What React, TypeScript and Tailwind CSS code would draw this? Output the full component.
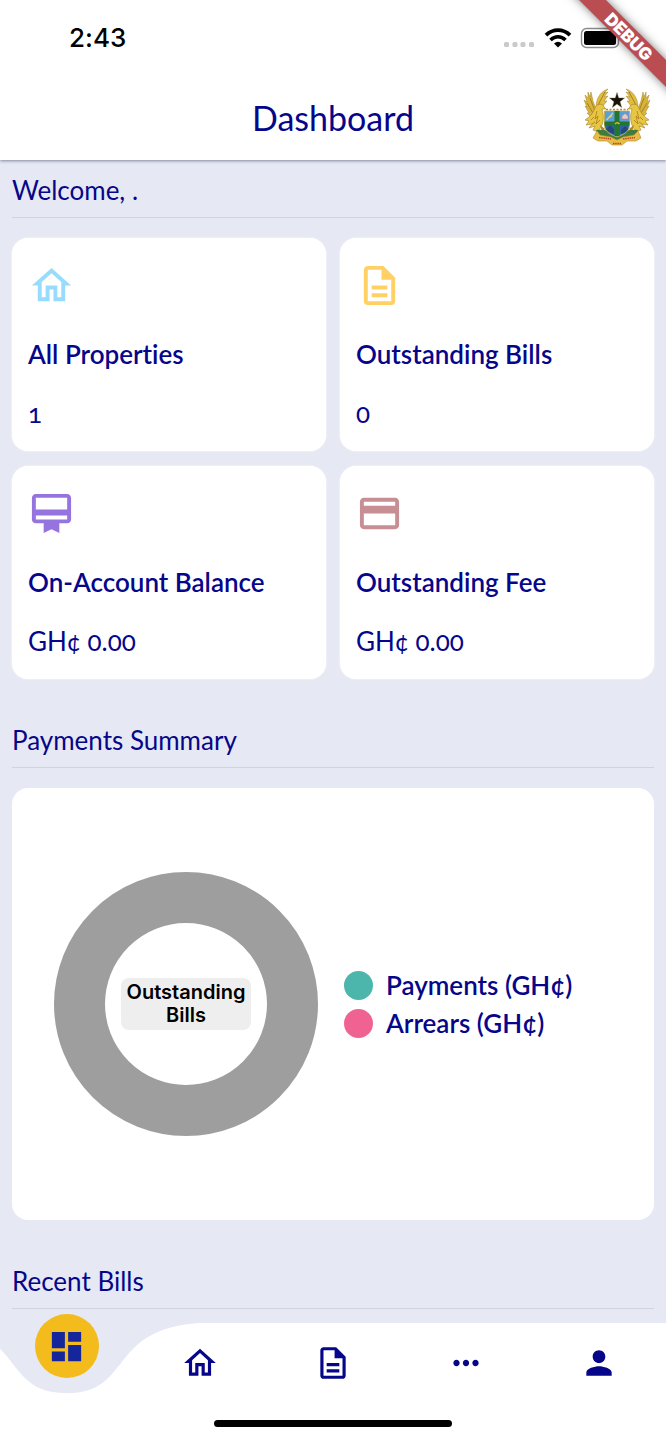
import type { ReactNode } from "react";

const HOME = "M12 5.69l5 4.5V18h-2v-6H9v6H7v-7.81l5-4.5M12 3L2 12h3v8h6v-6h2v6h6v-8h3L12 3z";
const DOC =
  "M8 16h8v2H8zm0-4h8v2H8zm6-10H6c-1.1 0-2 .9-2 2v16c0 1.1.89 2 1.99 2H18c1.1 0 2-.9 2-2V8l-6-6zm4 18H6V4h7v5h5v11z";
const MEMBERSHIP =
  "M20 2H4c-1.11 0-2 .89-2 2v11c0 1.11.89 2 2 2h4v5l4-2 4 2v-5h4c1.11 0 2-.89 2-2V4c0-1.11-.89-2-2-2zm0 13H4v-2h16v2zm0-5H4V4h16v6z";
const CARD =
  "M20 4H4c-1.11 0-1.99.89-1.99 2L2 18c0 1.11.89 2 2 2h16c1.11 0 2-.89 2-2V6c0-1.11-.89-2-2-2zm0 14H4v-6h16v6zm0-10H4V6h16v2z";
const DASHBOARD = "M3 13h8V3H3v10zm0 8h8v-6H3v6zm10 0h8V11h-8v10zm0-18v6h8V3h-8z";
const MORE =
  "M6 10c-1.1 0-2 .9-2 2s.9 2 2 2 2-.9 2-2-.9-2-2-2zm12 0c-1.1 0-2 .9-2 2s.9 2 2 2 2-.9 2-2-.9-2-2-2zm-6 0c-1.1 0-2 .9-2 2s.9 2 2 2 2-.9 2-2-.9-2-2-2z";
const PERSON =
  "M12 12c2.21 0 4-1.79 4-4s-1.79-4-4-4-4 1.79-4 4 1.79 4 4 4zm0 2c-2.67 0-8 1.34-8 4v2h16v-2c0-2.66-5.33-4-8-4z";

function Icon({ path, className }: { path: string; className: string }) {
  return (
    <svg viewBox="0 0 24 24" fill="currentColor" aria-hidden="true" className={className}>
      <path d={path} />
    </svg>
  );
}

function Eagle() {
  return (
    <g>
      <path d="M16 23 L13 15 L11 6 L10 11 L8 6 L8 12 L5 9 L7 16 L4 14 L7 21 L5 20 L9 27 L7 27 L12 32 Z" fill="#d8b43a" stroke="#a5822a" strokeWidth="0.5" />
      <path d="M16 22 C16 14 19 6 28 3 L24 7 L28 6 L24 11 L28 10 L24 15 L27 15 L22 21 Z" fill="#dfbd3f" stroke="#a5822a" strokeWidth="0.5" />
      <path d="M10 12 L15 25 M7 17 L13 27 M25 6 L18 19" fill="none" stroke="#8c6a1c" strokeWidth="0.7" />
      <path d="M16 20 C19 17 24 18 24 21 L26 23 L22 23 C24 29 24 36 21 41 C19 45 16 46 13 44 L15 40 L9 42 L12 38 L6 39 L9 35 L5 34 L9 31 C12 29 14 24 16 20 Z" fill="#e6c643" stroke="#a5822a" strokeWidth="0.6" />
      <path d="M17 25 L15 33 L18 30 L16 38 L20 34 M11 34 L14 31 M12 38 L15 36" fill="none" stroke="#ad7c1f" strokeWidth="0.8" />
      <path d="M20 39 L25 43 L22 46 Z" fill="#b9851f" />
    </g>
  );
}

function CoatOfArms() {
  return (
    <svg viewBox="0 0 74 64" role="img" aria-label="Ghana coat of arms" className="h-16 w-[74px]">
      <Eagle />
      <g transform="translate(74 0) scale(-1 1)">
        <Eagle />
      </g>
      <path d="M16 44 Q27 43 37 48 Q47 43 58 44 L54 53 Q45 50 37 55 Q29 50 20 53 Z" fill="#3f7d3d" />
      <path d="M24.500 25 H49.500 V39 C49.500 46 43 49 37 51 C31 49 24.500 46 24.500 39 Z" fill="#5a9fd8" stroke="#c8a838" strokeWidth="0.8" />
      <path d="M25 39 H49 C49 45 43 48 37 50 C31 48 25 45 25 39 Z" fill="#2b62a0" />
      <path d="M26 43 L30 39 L34 43 V48 Q28 46 26 43 Z M41 44 L45 40 L48 43 Q46 47 41 48 Z" fill="#27467a" />
      <path d="M34.500 25 H39.500 V50 H34.500 Z M24.500 35.500 H49.500 V39.500 H24.500 Z" fill="#24762f" />
      <path d="M26.500 34 L33 27 M28 32 L32 30" stroke="#e5cf78" strokeWidth="1.300" />
      <path d="M42 33 V30 L45 27.500 L48 30 V33 Z" fill="#edc9cb" stroke="#b87571" strokeWidth="0.500" />
      <path d="M35 38 Q37 35.500 39.500 38" fill="none" stroke="#d4b435" strokeWidth="1.500" />
      <path d="M26 23.500 H48" stroke="#b48a55" strokeWidth="1.400" strokeDasharray="2 1.500" />
      <path d="M37 6.500 L38.700 12 L44.500 12 L40 15.700 L41.700 21.500 L37 18 L32.300 21.500 L34 15.700 L29.500 12 L35.300 12 Z" fill="#16130c" stroke="#8b6a28" strokeWidth="0.400" />
      <path d="M17 45 L20 49 L31 51 L37 54 L43 51 L54 49 L58 45 L61 52 L56 55 L47 55 L42 59 H32 L27 55 L18 55 L13 52 Z" fill="#e6bd45" stroke="#b78625" strokeWidth="0.600" />
      <path d="M19 51.500 L31 53 M43 53 L55 51.500 M33 57.500 H41" stroke="#b5472c" strokeWidth="1.500" strokeDasharray="1.500 0.700" />
    </svg>
  );
}

function StatusBar() {
  return (
    <div className="flex h-[76px] items-center justify-between pr-11 pl-[69px]">
      <time className="font-['Inter',sans-serif] text-[26px] leading-8 font-medium text-black">2:43</time>
      <div className="flex items-center gap-2">
        <svg viewBox="0 0 34 26" aria-hidden="true" className="h-[26px] w-[34px]" fill="#cacaca">
          <rect x="2" y="17" width="5" height="5" rx="1.500" />
          <rect x="10.500" y="17" width="5" height="5" rx="1.500" />
          <rect x="18.500" y="17" width="5" height="5" rx="1.500" />
          <rect x="27" y="17" width="5" height="5" rx="1.500" />
        </svg>
        <svg viewBox="0 0 28 20" aria-hidden="true" className="h-5 w-7">
          <path d="M2 7.200 C9 .5 19 .5 26 7.200" fill="none" stroke="#000" strokeWidth="3.800" />
          <path d="M6.500 12 C11 7.700 17 7.700 21.500 12" fill="none" stroke="#000" strokeWidth="3.600" />
          <path d="M10 15.500 Q14 12 18 15.500 L14 19.500 Z" />
        </svg>
        <svg viewBox="0 0 42 22" aria-hidden="true" className="h-[22px] w-[42px]">
          <rect x="1.500" y="1.500" width="37" height="19" rx="5" fill="#fff" stroke="#8b8b8b" strokeWidth="1.400" />
          <rect x="4" y="4" width="32" height="14" rx="2.500" />
        </svg>
      </div>
    </div>
  );
}

function SectionTitle({ children }: { children: ReactNode }) {
  return (
    <h2 className="border-b border-[#d0d3dd] pb-[11px] text-[26px] leading-8 font-normal">{children}</h2>
  );
}

const stats = [
  { label: "All Properties", value: "1", icon: HOME, tint: "text-[#97dcfd]" },
  { label: "Outstanding Bills", value: "0", icon: DOC, tint: "text-[#ffd164]" },
  { label: "On-Account Balance", value: "GH¢ 0.00", icon: MEMBERSHIP, tint: "text-[#9674df]" },
  { label: "Outstanding Fee", value: "GH¢ 0.00", icon: CARD, tint: "text-[#c78e94]" },
];

const legend = [
  { label: "Payments (GH¢)", color: "bg-[#4db6ac]" },
  { label: "Arrears (GH¢)", color: "bg-[#f06292]" },
];

const tabs = [
  { label: "Properties", icon: HOME },
  { label: "Bills", icon: DOC },
  { label: "More", icon: MORE },
  { label: "Profile", icon: PERSON },
];

export default function App() {
  return (
    <div className="relative flex min-h-screen flex-col overflow-hidden bg-[#e6e9f3] font-['Lato',sans-serif] text-[#06068a] [font-variant-ligatures:none]">
      <header className="relative z-10 bg-white shadow-[0_1px_3px_rgba(60,70,100,0.6)]">
        <StatusBar />
        <div className="grid h-[84px] grid-cols-[1fr_auto_1fr] items-center">
          <h1 className="col-start-2 text-[34px] leading-10 font-normal">Dashboard</h1>
          <div className="justify-self-end pr-3">
            <CoatOfArms />
          </div>
        </div>
      </header>
      <div className="absolute top-[27px] -right-[63px] z-20 flex h-[19px] w-[200px] rotate-45 items-center justify-center bg-[#b94d52] font-['Inter',sans-serif] text-[17px] leading-5 font-black text-white shadow-[0_0_10px_rgba(0,0,0,0.5)]">
        DEBUG
      </div>

      <main className="flex-1 px-3 pt-[14px]">
        <SectionTitle>Welcome, .</SectionTitle>
        <div className="mt-5 grid grid-cols-2 gap-x-[14px] gap-y-[15px]">
          {stats.map((s) => (
            <section key={s.label} className="rounded-2xl bg-white px-4 pt-6 pb-[22px] shadow-[0_0_2px_#ffffff]">
              <Icon path={s.icon} className={`size-[47px] ${s.tint}`} />
              <h3 className="mt-[29px] text-[26px] leading-8 font-semibold">{s.label}</h3>
              <p className="mt-[27px] text-[26px] leading-8 oldstyle-nums">{s.value}</p>
            </section>
          ))}
        </div>

        <div className="mt-[45px]">
          <SectionTitle>Payments Summary</SectionTitle>
        </div>
        <section className="mt-5 flex h-[432px] items-center gap-[26px] rounded-2xl bg-white pl-[42px]">
          <div className="flex size-[264px] shrink-0 items-center justify-center rounded-full border-[51px] border-[#9e9e9e]">
            <p className="w-[130px] shrink-0 rounded-lg bg-[#eeeeee] py-[3px] text-center font-['Inter',sans-serif] text-[20px] leading-[23px] font-semibold text-black">
              Outstanding Bills
            </p>
          </div>
          <ul className="flex flex-col gap-[6px]">
            {legend.map((l) => (
              <li key={l.label} className="flex items-center gap-[13px] text-[26px] leading-8 font-semibold">
                <span className={`size-[29px] rounded-full ${l.color}`} />
                {l.label}
              </li>
            ))}
          </ul>
        </section>

        <div className="mt-[45px]">
          <SectionTitle>Recent Bills</SectionTitle>
        </div>
      </main>

      <nav aria-label="Main" className="relative mt-[13px] h-[117px]">
        <svg viewBox="0 0 666 117" preserveAspectRatio="none" aria-hidden="true" className="absolute inset-0 size-full">
          <path
            d="M-66.6 0 C26.600 5.850 0 70.200 66.600 70.200 C133.200 70.200 106.600 5.850 199.800 0 H666 V117 H-66.600 Z"
            fill="#fff"
          />
        </svg>
        <div className="relative grid h-20 grid-cols-5 items-center justify-items-center">
          <button
            type="button"
            aria-label="Dashboard"
            className="-mt-[34px] flex size-16 items-center justify-center rounded-full bg-[#f3bb1c] text-[#15259b]"
          >
            <Icon path={DASHBOARD} className="size-[39px]" />
          </button>
          {tabs.map((t) => (
            <button key={t.label} type="button" aria-label={t.label} className="p-2">
              <Icon path={t.icon} className="size-[38px]" />
            </button>
          ))}
        </div>
        <div className="relative mx-auto mt-[17px] h-[7px] w-[238px] rounded-full bg-black" />
      </nav>
    </div>
  );
}
